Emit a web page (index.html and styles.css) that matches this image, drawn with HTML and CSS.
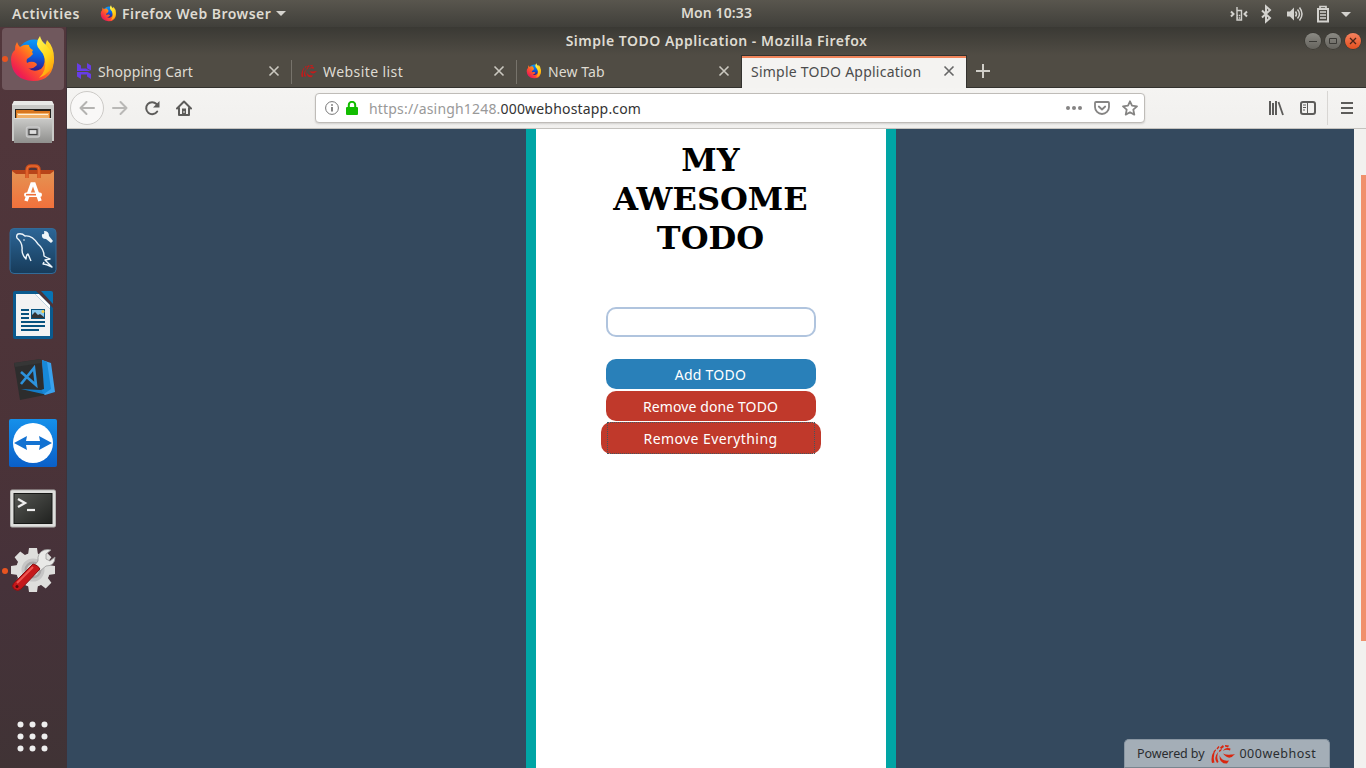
FILE: index.html
```html
<!DOCTYPE html>
<html lang="en">
<head>
<meta charset="utf-8">
<title>Simple TODO Application</title>
<link rel="stylesheet" href="styles.css">
</head>
<body>
<svg class="defs" width="0" height="0">
  <defs>
    <linearGradient id="fxBody" x1="1" y1="0" x2="0" y2="1"><stop offset="0" stop-color="#fff03a"/><stop offset=".3" stop-color="#ffb00a"/><stop offset=".55" stop-color="#ff5a2a"/><stop offset=".8" stop-color="#f0204f"/><stop offset="1" stop-color="#c4109a"/></linearGradient>
    <linearGradient id="fxGlobe" x1=".6" y1="0" x2=".5" y2="1"><stop offset="0" stop-color="#0a9cf8"/><stop offset=".5" stop-color="#0a5fe0"/><stop offset="1" stop-color="#38107c"/></linearGradient>
    <linearGradient id="fxTail" x1="0" y1="0" x2=".5" y2="1"><stop offset="0" stop-color="#fff75a"/><stop offset=".6" stop-color="#ffd91c"/><stop offset="1" stop-color="#ffa20c"/></linearGradient>
    <linearGradient id="metal" x1="0" y1="0" x2="0" y2="1"><stop offset="0" stop-color="#cbcbc9"/><stop offset="1" stop-color="#8f8f8d"/></linearGradient>
    <linearGradient id="bag" x1="0" y1="0" x2="0" y2="1"><stop offset="0" stop-color="#e49352"/><stop offset="1" stop-color="#f2713c"/></linearGradient>
    <linearGradient id="sql" x1="0" y1="0" x2="0" y2="1"><stop offset="0" stop-color="#2c6697"/><stop offset="1" stop-color="#173b5a"/></linearGradient>
    <linearGradient id="tv" x1="0" y1="0" x2="0" y2="1"><stop offset="0" stop-color="#1590ea"/><stop offset="1" stop-color="#0a5fc8"/></linearGradient>
    <linearGradient id="term" x1="0" y1="0" x2="1" y2="1"><stop offset="0" stop-color="#555753"/><stop offset="1" stop-color="#20211f"/></linearGradient>
    <symbol id="firefox" viewBox="0 0 48 48">
      <circle cx="25" cy="21" r="16.500" fill="url(#fxGlobe)"/>
      <path fill="url(#fxBody)" d="M8 7q1 3 3 5 4-3 9-2 0 3 4 5l-1 2 1 2-3 3-3 2q-1 2 0 4 3-2 7-1 3 1 3 3-5 5-9 3 6 5 13 1 6-5 2-17L38 5q7 7 7 18 0 23-21 23Q3 45 2 25q0-7 4-10 0-5 2-8z"/>
      <path fill="url(#fxTail)" d="M31 1q1 5 6 9 8 8 8 16-2 12-15 17 8-7 6-19-1-5-5-9-6-6 0-14z"/>
    </symbol>
    <symbol id="swirl" viewBox="0 0 24 20">
      <g fill="currentColor"><path d="M5 5Q-1 11 1 19l2.500-.5Q1.500 12 5 5z"/><path d="M7.500 7.500Q2 14 6 19l1.500-1Q5 13 7.500 7.500z"/><path d="M8.500 11Q8 20 16 19.500l2-3Q10 17.500 8.500 11z"/><path d="M12 9.500q6 8 12 .5-2.500.5-4 .5-4 1-8-1z"/><path d="M12 7q2-4 7.500-2.500l-.5 2Q15 5 12 7z"/><path d="M9 3.500l3-2.500 1 2-3 2zM5.500 4.500l2-2.500 1 1-2 2.500zM14 1l4 .5-1 2-3-1zM2.500 7.500l2-2 .5 1-2 2zM8 6.500l3-2-1 2.500-2 1z"/></g>
    </symbol>
    <symbol id="close" viewBox="0 0 12 12"><path d="M1.500 1.500l9 9m0-9l-9 9" fill="none" stroke="currentColor" stroke-width="1.600"/></symbol>
  </defs>
</svg>

<header class="panel">
  <span class="activities">Activities</span>
  <svg class="app-icon" width="17" height="17"><use href="#firefox"/></svg>
  <span class="app-name">Firefox Web Browser</span>
  <svg class="caret" width="10" height="5" viewBox="0 0 10 5"><path d="M0 0h10L5 5z" fill="#d5d3ce"/></svg>
  <span class="clock">Mon 10:33</span>
  <svg class="tray" width="126" height="20" viewBox="0 0 126 20" fill="none" stroke="#d3d2ce">
    <path d="M1 7.500l2.500 2.500L1 12.500M17 7.500l-2.500 2.500 2.500 2.500" stroke-width="2"/><path d="M7 3v13h4.500V6.500H7" stroke-width="1.400"/><path d="M7 11.500h4M7 14h4" stroke-width="1.600" stroke-dasharray="1.200 .7"/>
    <path d="M32 6.500l8 7.500-4 3.500v-15l4 3.500-8 7.500" stroke-width="2"/>
    <path d="M57 7.500h3l4-4v13l-4-4h-3z" fill="#d3d2ce" stroke="none"/><path d="M65.500 7.500q2 2.500 0 5M67.500 5.500q4 4.500 0 9M69.500 3.500q5 6.500 0 13" stroke-width="1.500"/>
    <path d="M88 5h10v12.500H88z" stroke-width="2"/><path d="M90 4v-1.500h6V4M90 8h6M90 11h6M90 14h6" stroke-width="1.700"/>
    <path d="M111 8h10l-5 5z" fill="#d3d2ce" stroke="none"/>
  </svg>
</header>

<div class="desktop">
  <nav class="dock">
    <div class="slot active running"><svg width="48" height="48"><use href="#firefox"/></svg></div>
    <div class="slot"><svg width="48" height="48" viewBox="0 0 48 48">
      <path d="M5 2h38l2 4v36H3V6z" fill="#c9c9c7"/><path d="M5 2h38l2 4H3z" fill="#e9e9e7"/><path d="M6 10h36v9H6z" fill="#242321"/><path d="M7 11h17l2 1h15v7H7z" fill="#d9761f"/><path d="M8 14h32v5H8z" fill="#f0b067"/><path d="M9 15h30v1H9z" fill="#fff0dc"/><path d="M5 19h38v25H5z" fill="url(#metal)"/><path d="M5 19h38v1H5z" fill="#ddd"/><rect x="17.500" y="28" width="13" height="10" rx="2" fill="#aaa" stroke="#c9c9c9" stroke-width="1.500"/><rect x="20" y="30.500" width="8" height="5" fill="#ddd" stroke="#444" stroke-width="1.200"/></svg></div>
    <div class="slot"><svg width="48" height="48" viewBox="0 0 48 48">
      <path d="M3 7h42v5H3z" fill="#b8441a"/><path d="M3 8l4 3h34l4-3v37H3z" fill="url(#bag)"/><path d="M18 15V7q0-4 4-4h4q4 0 4 4v8" fill="none" stroke="#cf4f1c" stroke-width="3.500"/><path d="M18 15V7q0-4 4-4h4q4 0 4 4v8" fill="none" stroke="#ec7137" stroke-width="1.200"/><path d="M17 38l6-17h2l6 17" fill="none" stroke="#fff" stroke-width="3.600"/><rect x="15" y="29.500" width="18" height="4.500" rx="2.200" fill="#fff"/><path d="M17 31.700h10" stroke="#ee7039" stroke-width="1.600"/></svg></div>
    <div class="slot"><svg width="48" height="48" viewBox="0 0 48 48">
      <rect x="1" y="1.500" width="46" height="45" rx="4" fill="url(#sql)" stroke="#326b98"/><path d="M22 34l-3-7q-2 1-2 5-4-4-4-9 1-7-5-12-1-3 1-4 4-1 7 2 7-1 13 8 6 5 6 12 3 2 6 3l-5 1 7 7q-6-3-9-3l1-2" fill="none" stroke="#edf5fa" stroke-width="1.400" stroke-linejoin="round"/><circle cx="15" cy="13" r=".8" fill="#fff"/><path d="M35 4q1 4-2 3-1 5 4 5l5 4 2-2-4-5q0-5-5-5z" fill="#eef5f9"/></svg></div>
    <div class="slot"><svg width="48" height="48" viewBox="0 0 48 48">
      <path d="M6 0h21l17 17v29q0 2-2 2H6q-2 0-2-2V2q0-2 2-2z" fill="#0a5a8e"/><path d="M32 0h10q2 0 2 2v11z" fill="#0874b5"/><path d="M7 3h19l15 15v27H7z" fill="#f2f2f2"/><path d="M26 3l15 15v-4L30 3z" fill="#fff"/><path d="M12 19h8M12 23h8M12 27h8M12 31h24M12 35h24M12 39h18" stroke="#07527e" stroke-width="2"/><path d="M22 18h14v10H22z" fill="#07527e"/><path d="M23 19h12v8H23z" fill="#89c8ec"/><path d="M23 27v-3l3-3 3 3 2-1 4 3v1z" fill="#333"/><circle cx="34" cy="20.500" r="1.500" fill="#f8cf45"/></svg></div>
    <div class="slot"><svg width="48" height="48" viewBox="0 0 48 48">
      <path d="M5 8l27-4 4 36-25 5z" fill="#2d2d2d"/><path d="M5 8l27-4 .5 4L6 12z" fill="#363636"/><path d="M12 34l20 1 5 3-3 1z" fill="#147cc8"/><path d="M33 5l9 3 4 29-10 3q-3-1 0-7z" fill="#39a1ee"/><path d="M33 5l5 2 4 27-7 5-3-4 3-1z" fill="#1788d8"/><path d="M12 17l15 13-2-17-13 16" fill="none" stroke="#2d92dc" stroke-width="2.600"/></svg></div>
    <div class="slot"><svg width="48" height="48" viewBox="0 0 48 48">
      <rect width="48" height="48" rx="2" fill="url(#tv)"/><circle cx="24" cy="24" r="20" fill="#fff"/><path d="M5 24l13-7-1 5h14l-1-5 13 7-13 7 1-5H17l1 5z" fill="#1272d2"/></svg></div>
    <div class="slot"><svg width="48" height="48" viewBox="0 0 48 48">
      <rect x="1.500" y="7" width="45" height="37" rx="1.500" fill="#dededc" stroke="#b5b5b3"/><rect x="5" y="10.500" width="38" height="30" fill="url(#term)" stroke="#171816"/><path d="M9 16l7 4-7 4" fill="none" stroke="#eee" stroke-width="2.300"/><path d="M18 27h8" stroke="#eee" stroke-width="2.200"/></svg></div>
    <div class="slot running"><svg width="48" height="48" viewBox="0 0 48 48">
      <g fill="#dededc"><circle cx="24" cy="23" r="17"/><path d="M20 1h8l1 7H19zM19 38h10l-1 7h-8zM2 19l7-1v10l-7-1zM39 18l7 1v8l-7 1z"/><path d="M20 1h8l1 7H19zM19 38h10l-1 7h-8zM2 19l7-1v10l-7-1zM39 18l7 1v8l-7 1z" transform="rotate(45 24 23)"/></g><circle cx="24" cy="23" r="10" fill="#a8a6a7" stroke="#c6c5c5" stroke-width="3"/><circle cx="24" cy="23" r="6" fill="#d5d5d3"/><path d="M25 19l4-5q-1-8 6-11 4-1 7 0l-5 4v5l4 2 5-4q0 9-9 9l-6 5z" fill="#e9e9e7" stroke="#999" stroke-width=".8"/><path d="M24 17q5 1 7 5L12 42q-3 3-7 0-3-3 0-6z" fill="#c5181b" stroke="#8b1013"/><path d="M24 20L8 36" stroke="#ef5550" stroke-width="2"/><circle cx="8" cy="39.500" r="1.500" fill="#4f0b0c"/></svg></div>
    <svg class="apps" width="31" height="31" viewBox="0 0 31 31" fill="#eee"><circle cx="3.500" cy="3.500" r="3"/><circle cx="15.500" cy="3.500" r="3"/><circle cx="27.500" cy="3.500" r="3"/><circle cx="3.500" cy="15.500" r="3"/><circle cx="15.500" cy="15.500" r="3"/><circle cx="27.500" cy="15.500" r="3"/><circle cx="3.500" cy="27.500" r="3"/><circle cx="15.500" cy="27.500" r="3"/><circle cx="27.500" cy="27.500" r="3"/></svg>
  </nav>

  <main class="window">
    <div class="titlebar">
      <span class="win-title">Simple TODO Application - Mozilla Firefox</span>
      <div class="win-buttons">
        <span class="wb"><svg width="16" height="16"><path d="M4 8.500h8" stroke="#3b3a36"/></svg></span>
        <span class="wb"><svg width="16" height="16"><path d="M4.500 5.500h7v5h-7z" fill="none" stroke="#3b3a36"/></svg></span>
        <span class="wb wb-close"><svg width="16" height="16"><path d="M5 5l6 6m0-6l-6 6" stroke="#4a2418" stroke-width="1.300"/></svg></span>
      </div>
    </div>
    <div class="tabs">
      <div class="tab"><svg class="fav" width="16" height="16" viewBox="0 0 16 16" fill="#673de6"><path d="M1 0l4 2.500V5.500h5L14.500 8H1zM11 0l4 2.500V7.500l-4-2.300zM1 9h10.500l3.500 2V16l-4-2.500v-2H5V16l-4-2.500z"/></svg><span class="label t1">Shopping Cart</span><svg class="x" width="12" height="12"><use href="#close"/></svg></div>
      <div class="tab"><svg class="fav red" width="16" height="16"><use href="#swirl"/></svg><span class="label t2">Website list</span><svg class="x" width="12" height="12"><use href="#close"/></svg></div>
      <div class="tab"><svg class="fav" width="16" height="16"><use href="#firefox"/></svg><span class="label t3">New Tab</span><svg class="x" width="12" height="12"><use href="#close"/></svg></div>
      <div class="tab selected"><span class="label t4">Simple TODO Application</span><svg class="x" width="12" height="12"><use href="#close"/></svg></div>
      <svg class="plus" width="14" height="14"><path d="M7 0v14M0 7h14" stroke="#d0cec8" stroke-width="2"/></svg>
    </div>
    <div class="toolbar">
      <span class="back"><svg width="16" height="16" viewBox="0 0 16 16" fill="none" stroke="#b4b3b1" stroke-width="2" stroke-linecap="round" stroke-linejoin="round"><path d="M15 8H1.500M7.500 2l-6 6 6 6"/></svg></span>
      <svg class="fwd" width="16" height="16" viewBox="0 0 16 16" fill="none" stroke="#b9b8b6" stroke-width="2" stroke-linecap="round" stroke-linejoin="round"><path d="M1 8h13.500M8.500 2l6 6-6 6"/></svg>
      <svg class="reload" width="16" height="16" viewBox="0 0 16 16"><path d="M13.200 11.500A6 6 0 1 1 12.500 4" fill="none" stroke="#5d5c5a" stroke-width="2" stroke-linecap="round"/><path d="M15.500 1v6.500H9z" fill="#5d5c5a"/></svg>
      <svg class="home" width="16" height="16" viewBox="0 0 16 16"><path d="M1 8.500l7-7 7 7M3 8v7h10V8" fill="none" stroke="#5d5c5a" stroke-width="2" stroke-linecap="round" stroke-linejoin="round"/><path d="M6 15V8.500h4V15" fill="#5d5c5a"/><path d="M8 11v2" stroke="#f4f3f1"/></svg>
      <div class="urlbar">
        <svg class="info" width="14" height="14" viewBox="0 0 14 14"><circle cx="7" cy="7" r="6.400" fill="none" stroke="#777"/><path d="M7 6v4.500M7 3.300v1.500" stroke="#777" stroke-width="1.800"/></svg>
        <svg class="lock" width="12" height="14" viewBox="0 0 12 14"><path d="M2.800 7V4a3.200 3.200 0 0 1 6.400 0v3" fill="none" stroke="#12bc00" stroke-width="2"/><rect y="6" width="12" height="8" rx="1" fill="#12bc00"/></svg>
        <span class="url"><span class="sub">https://asingh1248.</span>000webhostapp.com</span>
        <svg class="dots" width="16" height="16" fill="#858483"><circle cx="2" cy="8" r="2"/><circle cx="8" cy="8" r="2"/><circle cx="14" cy="8" r="2"/></svg>
        <svg class="pocket" width="16" height="16" viewBox="0 0 16 16" fill="none" stroke="#858483" stroke-width="1.800" stroke-linecap="round" stroke-linejoin="round"><path d="M2 2h12q1 0 1 1v4a7 7 0 0 1-14 0V3q0-1 1-1z"/><path d="M4.800 6.500L8 9.500l3.200-3"/></svg>
        <svg class="star" width="16" height="16" viewBox="0 0 16 16"><path d="M8 1.300l2 4.400 5 .6-3.700 3.300 1 5L8 12.200l-4.300 2.400 1-5L1 6.300l5-.6z" fill="none" stroke="#858483" stroke-width="1.800" stroke-linejoin="round"/></svg>
      </div>
      <svg class="library" width="16" height="16" viewBox="0 0 16 16" stroke="#5d5c5a" stroke-width="2"><path d="M2 1v14M5 3v12M8 1v14"/><path d="M10.500 2l4.500 13" stroke-width="1.800"/></svg>
      <svg class="sidebar" width="16" height="16" viewBox="0 0 16 16" fill="none" stroke="#5d5c5a"><rect x="1" y="2" width="14" height="12" rx="2" stroke-width="2"/><path d="M7.500 2v12M3 5h3M3 7.500h3M3 10h2"/></svg>
      <span class="sep"></span>
      <svg class="menu" width="12" height="14" viewBox="0 0 12 14"><path d="M0 2h12M0 7h12M0 12h12" stroke="#5d5c5a" stroke-width="2"/></svg>
    </div>
    <div class="viewport">
      <div class="page">
        <section class="todo">
          <h1>MY AWESOME TODO</h1>
          <input class="entry" type="text" aria-label="Todo">
          <button class="btn add">Add TODO</button>
          <button class="btn done">Remove done TODO</button>
          <button class="btn all">Remove Everything</button>
        </section>
        <div class="powered"><span class="pw-by">Powered by</span><svg width="24" height="20"><use href="#swirl"/></svg><span class="pw-host">000webhost</span></div>
      </div>
      <div class="scroll"><div class="thumb"></div></div>
    </div>
  </main>
</div>
</body>
</html>
```
FILE: styles.css
```css
* { box-sizing: border-box; }
body { margin: 0; width: 1366px; height: 768px; overflow: hidden; display: flex; flex-direction: column; font-family: "Noto Sans", "Open Sans", sans-serif; font-size: 14px; white-space: nowrap; }
svg { display: block; flex: none; }
.defs { position: absolute; }

.panel { position: relative; height: 27px; flex: none; display: flex; align-items: center; padding-left: 12px; background: linear-gradient(#59564e, #403f3a); color: #dfdbd2; font-weight: 600; font-size: 14px; }
.activities { width: 88px; letter-spacing: .55px; }
.app-icon { margin-right: 5px; }
.app-name { width: 149px; letter-spacing: .47px; }
.caret { margin-left: 5px; }
.clock { position: absolute; left: 681px; top: 3px; letter-spacing: .1px; }
.tray { margin-left: auto; margin-right: 10px; }

.desktop { flex: 1; display: flex; min-height: 0; }
.dock { width: 67px; flex: none; display: flex; flex-direction: column; background: linear-gradient(#52373c, #4b3338 55%, #46323a 75%, #403335); border-right: 1px solid #3f3238; }
.slot { position: relative; width: 66px; height: 64px; flex: none; display: grid; place-items: center; }
.slot svg { position: relative; }
.active::before { content: ""; position: absolute; left: 2px; top: 1px; width: 62px; height: 62px; border-radius: 4px; background: #70585d; }
.running::after { content: ""; position: absolute; left: 2px; top: 29px; width: 6px; height: 6px; border-radius: 50%; background: #e95420; }
.apps { margin: auto 18px 16px 17px; }

.window { flex: 1; min-width: 0; display: flex; flex-direction: column; }
.titlebar { position: relative; height: 28px; flex: none; display: flex; align-items: center; justify-content: center; padding-bottom: 1px; background: linear-gradient(#3a3934, #504c44); color: #dfdbd2; font-weight: 600; }
.win-title { letter-spacing: .5px; }
.win-buttons { position: absolute; right: 5px; top: 6px; display: flex; gap: 4px; }
.wb { width: 16px; height: 16px; border-radius: 50%; background: linear-gradient(#8b8a84, #65635d); box-shadow: 0 0 0 .5px #33322e; }
.wb-close { background: linear-gradient(#f4825f, #e5501f); }

.tabs { height: 33px; flex: none; display: flex; background: #504c44; border-bottom: 1px solid #33322e; color: #dfdbd2; }
.tab { width: 225px; height: 32px; display: flex; align-items: center; padding: 0 12px 0 9px; position: relative; }
.tab:not(.selected):not(:nth-child(3))::after { content: ""; position: absolute; right: 0; top: 5px; width: 1px; height: 24px; background: #77736b; }
.fav { margin-right: 6px; }
.red { color: #c81a1a; }
.t1 { letter-spacing: .07px; }
.t2 { letter-spacing: .42px; }
.t3 { letter-spacing: .1px; }
.t4 { letter-spacing: .23px; }
.x { margin-left: auto; color: #cbc8c0; }
.selected { width: 226px; height: 33px; margin-left: -1px; padding: 0 11px 2px 9px; background: #f4f3f1; border: 1px solid #33322e; border-bottom: 0; box-shadow: inset 0 2px #f0845a; color: #4c4c4c; }
.selected .x { color: #666; }
.plus { margin: 9px 0 0 9px; }

.toolbar { height: 41px; flex: none; display: flex; align-items: center; background: linear-gradient(#f5f4f2, #f1f0ee); border-bottom: 1px solid #c4c2be; }
.back { width: 34px; height: 34px; margin-left: 3px; border: 1px solid #cccac7; border-radius: 50%; display: grid; place-items: center; background: #f9f8f7; }
.fwd { margin-left: 8px; }
.reload { margin-left: 16px; }
.home { margin-left: 16px; }
.urlbar { width: 830px; height: 30px; margin-left: 123px; display: flex; align-items: center; background: #fff; border: 1px solid #bfbcb8; border-radius: 4px; box-shadow: 0 1px 2px #0002; padding: 0 6px 0 9px; }
.lock { margin: 0 11px 0 7px; }
.url { color: #333; letter-spacing: .18px; }
.sub { color: #999; }
.dots { margin-left: auto; }
.pocket, .star { margin-left: 12px; }
.library { margin-left: 123px; }
.sidebar { margin-left: 16px; }
.sep { width: 1px; height: 34px; margin: 0 13px 0 11px; background: #d8d6d3; }

.viewport { flex: 1; display: flex; min-height: 0; }
.page { position: relative; flex: 1; display: flex; justify-content: center; background: #34495e; }
.todo { width: 370px; border: solid #00a5a5; border-width: 0 10px; background: #fff; display: flex; flex-direction: column; align-items: center; padding-top: 12px; }
h1 { margin: 0 0 49px; width: 210px; font: bold 32px/39px "DejaVu Serif", serif; color: #000; text-align: center; white-space: normal; }
.entry { width: 210px; height: 30px; border: 2px solid #b0c4de; border-radius: 10px; margin: 0 0 22px; background: #fff; }
.btn { width: 210px; height: 30px; border: 0; border-radius: 10px; padding: 0; margin: 0 0 2px; color: #fff; font: 14px "Noto Sans", sans-serif; letter-spacing: .1px; }
.add { background: #2980b9; letter-spacing: .25px; }
.done { background: #c0392b; margin-bottom: 1px; }
.all { position: relative; width: 220px; height: 32px; background: #c0392b; letter-spacing: .42px; }
.all::after { content: ""; position: absolute; inset: 0 6px; border: 1px dotted #45555c; }
.powered { position: absolute; right: 24px; bottom: 0; width: 206px; height: 29px; border-radius: 5px 5px 0 0; background: #a4aeb7; border: 1px solid #8996a2; border-bottom-color: #78858f; display: flex; align-items: center; padding-left: 12px; color: #2a2d30; font-size: 12.500px; }
.pw-by { letter-spacing: -.1px; }
.pw-host { letter-spacing: .5px; }
.powered svg { margin: 0 4px 0 7px; color: #d9260f; }
.scroll { width: 12px; flex: none; display: flex; justify-content: flex-end; background: #f2f1ef; padding-top: 46px; }
.thumb { width: 5px; height: 466px; background: #f0906c; }
```
